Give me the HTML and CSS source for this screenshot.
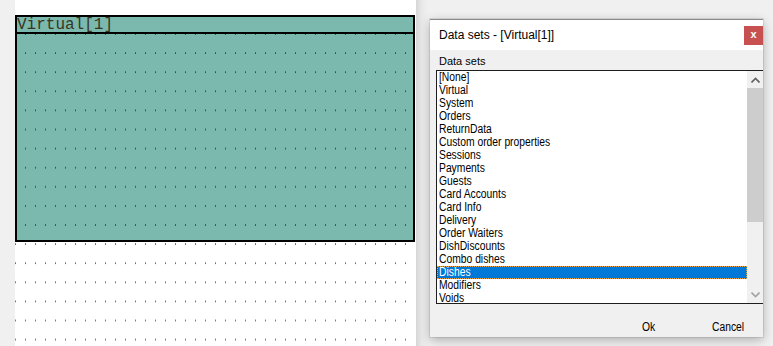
FILE: index.html
```html
<!DOCTYPE html>
<html lang="en">
<head>
    <meta charset="UTF-8">
    <title>Data sets</title>
<link rel="stylesheet" href="styles.css">
</head>

<body>
    <div class="app">
        <div class="gutter"></div>

        <div class="canvas">
            <div class="band">
                <div class="band_title">Virtual[1]</div>
                <div class="band_body"></div>
            </div>
            <!-- design grid -->
            <svg class="grid" width="400" height="313">
                <defs>
                    <pattern id="dots" width="10" height="19.1" patternUnits="userSpaceOnUse">
                        <rect x="0" y="0.5" width="1" height="1" fill="#000"></rect>
                    </pattern>
                </defs>
                <rect width="400" height="313" fill="url(#dots)" shape-rendering="crispEdges"></rect>
            </svg>
        </div>

        <div class="side">
            <div class="dialog">
                <div class="dialog_title">
                    <span>Data sets - [Virtual[1]]</span>
                    <div class="close">x</div>
                </div>
                <div class="dialog_body">
                    <div class="label">Data sets</div>
                    <div class="listbox">
                        <div class="items">
                            <div class="item"><span>[None]</span></div>
                            <div class="item"><span>Virtual</span></div>
                            <div class="item"><span>System</span></div>
                            <div class="item"><span>Orders</span></div>
                            <div class="item"><span>ReturnData</span></div>
                            <div class="item"><span>Custom order properties</span></div>
                            <div class="item"><span>Sessions</span></div>
                            <div class="item"><span>Payments</span></div>
                            <div class="item"><span>Guests</span></div>
                            <div class="item"><span>Card Accounts</span></div>
                            <div class="item"><span>Card Info</span></div>
                            <div class="item"><span>Delivery</span></div>
                            <div class="item"><span>Order Waiters</span></div>
                            <div class="item"><span>DishDiscounts</span></div>
                            <div class="item"><span>Combo dishes</span></div>
                            <div class="item selected"><span>Dishes</span></div>
                            <div class="item"><span>Modifiers</span></div>
                            <div class="item"><span>Voids</span></div>
                        </div>
                        <div class="scrollbar">
                            <svg class="arrow" width="9" height="6" viewBox="0 0 9 6">
                                <path d="M0.5 5.5 L4.5 1.5 L8.5 5.5" fill="none" stroke="#606060" stroke-width="1.6"></path>
                            </svg>
                            <div class="thumb"></div>
                            <div class="track"></div>
                            <svg class="arrow" width="9" height="6" viewBox="0 0 9 6">
                                <path d="M0.5 0.5 L4.5 4.5 L8.5 0.5" fill="none" stroke="#a3a3a3" stroke-width="1.6"></path>
                            </svg>
                        </div>
                    </div>
                    <div class="buttons">
                        <div class="btn"><span>Ok</span></div>
                        <div class="btn"><span>Cancel</span></div>
                    </div>
                </div>
            </div>
        </div>
    </div>
</body>
</html>
```

FILE: styles.css
```css
body{
    margin:0;
    overflow: hidden;
}
.app{
    display: flex;
    width: 773px;
    height: 346px;
    background-color: #f0f0f0;
}
.gutter{
    width: 15px;
    background-color: #f0f0f0;
}
.canvas{
    position: relative;
    width: 401px;
    padding-top: 15px;
    box-sizing: border-box;
    background-color: white;
}
.band{
    width: 400px;
    height: 227px;
    box-sizing: border-box;
    border: 2px solid black;
    background-color: #7bb9af;
    display: flex;
    flex-direction: column;
}
.band_title{
    height: 17px;
    box-sizing: border-box;
    padding-top: 1px;
    line-height: 14px;
    font-family: "Liberation Mono", "Courier New", monospace;
    font-size: 16px;
    color: #3a351c;
    border-bottom: 2px solid black;
    white-space: nowrap;
}
.band_body{
    flex: 1;
}
.grid{
    position: absolute;
    left: 0;
    top: 33px;
    pointer-events: none;
}
.side{
    flex: 1;
    padding: 19px 0 0 14px;
    background: linear-gradient(to right, #d6d6d6, #e9e9e9 6px, #f0f0f0 13px);
}
.dialog{
    width: 333px;
    height: 318px;
    box-sizing: border-box;
    background-color: #f0f0f0;
    border-top: 1px solid #8a8a8a;
    box-shadow: 0 0 0 1px rgba(0,0,0,0.08), 0 3px 10px rgba(0,0,0,0.28);
    display: flex;
    flex-direction: column;
    font-family: "Liberation Sans", Arial, sans-serif;
}
.dialog_title{
    height: 30px;
    background-color: white;
    display: flex;
    align-items: center;
    justify-content: space-between;
    padding-left: 9px;
    font-size: 12px;
    color: black;
}
.close{
    width: 19px;
    height: 19px;
    background-color: #c75050;
    color: white;
    font-size: 11px;
    font-weight: bold;
    line-height: 17px;
    text-align: center;
}
.dialog_body{
    flex: 1;
    padding: 4px 0 0 6px;
    display: flex;
    flex-direction: column;
}
.label{
    font-size: 11px;
    line-height: 14px;
    padding-left: 3px;
    color: black;
}
.listbox{
    margin-top: 2px;
    height: 234px;
    box-sizing: border-box;
    border: 1px solid #1e1e1e;
    border-right: none;
    background-color: white;
    display: flex;
    overflow: hidden;
}
.items{
    flex: 1;
    font-size: 12px;
    line-height: 13px;
    color: black;
}
.item{
    height: 13px;
    padding-left: 2px;
    white-space: nowrap;
}
/* narrow system font look */
.item span,
.btn span{
    display: inline-block;
    transform: scaleX(0.86);
    transform-origin: left center;
}
.item.selected{
    background-color: #0078d7;
    color: white;
    outline: 1px dotted #e8a24a;
    outline-offset: -1px;
}
.scrollbar{
    width: 16px;
    background-color: #f0f0f0;
    display: flex;
    flex-direction: column;
    align-items: center;
}
.arrow{
    margin: 6px 0 5px;
}
.thumb{
    width: 100%;
    height: 134px;
    background-color: #cdcdcd;
}
.track{
    flex: 1;
}
.buttons{
    display: flex;
    justify-content: flex-end;
    margin-top: 13px;
}
.btn{
    height: 20px;
    line-height: 20px;
    font-size: 12px;
    color: black;
}
.btn:first-child{
    width: 70px;
}
.btn:last-child{
    width: 51px;
}
```
